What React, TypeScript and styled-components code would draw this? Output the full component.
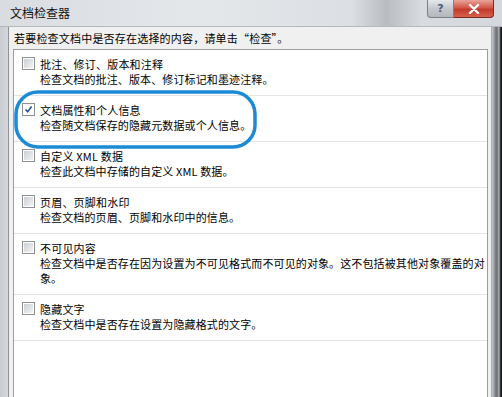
import { createGlobalStyle } from "styled-components";
import styled from "styled-components";

const GlobalStyle = createGlobalStyle`
  html, body {
    margin: 0;
    padding: 0;
    background: #ffffff;
  }
  body {
    font-family: "Noto Sans CJK SC", "Noto Sans", sans-serif;
    color: #000;
  }
`;

type ItemData = {
  title: string;
  desc: string;
  checked?: boolean;
};

const items: ItemData[] = [
  { title: "批注、修订、版本和注释", desc: "检查文档的批注、版本、修订标记和墨迹注释。" },
  { title: "文档属性和个人信息", desc: "检查随文档保存的隐藏元数据或个人信息。", checked: true },
  { title: "自定义 XML 数据", desc: "检查此文档中存储的自定义 XML 数据。" },
  { title: "页眉、页脚和水印", desc: "检查文档的页眉、页脚和水印中的信息。" },
  {
    title: "不可见内容",
    desc: "检查文档中是否存在因为设置为不可见格式而不可见的对象。这不包括被其他对象覆盖的对象。",
  },
  { title: "隐藏文字", desc: "检查文档中是否存在设置为隐藏格式的文字。" },
];

const Window = styled.div`
  width: 502px;
  height: 397px;
  display: flex;
  flex-direction: column;
  overflow: hidden;
  background: linear-gradient(90deg, #c9cdd2 0%, #d6dadf 2%, #d2d6db 100%);
`;

const TitleBar = styled.div`
  height: 27px;
  flex: none;
  display: flex;
  align-items: flex-start;
  justify-content: space-between;
  background: linear-gradient(
    90deg,
    #d9dde2 0%,
    #e4e7ea 40%,
    #dcdfe3 70%,
    #b9bdc2 77%,
    #d8dce0 84%,
    #d4d8dc 100%
  );
  border-bottom: 1px solid #b5b9be;
  box-sizing: border-box;
`;

const Title = styled.div`
  font-size: 12px;
  line-height: 26px;
  padding-left: 10px;
  color: #111;
`;

const Controls = styled.div`
  display: flex;
  margin-right: 8px;
`;

const HelpButton = styled.div`
  width: 27px;
  height: 18px;
  box-sizing: border-box;
  border: 1px solid #7d8186;
  border-top: none;
  border-radius: 0 0 0 4px;
  background: linear-gradient(180deg, #e6e8eb 0%, #c4c8cd 50%, #b4b8bd 100%);
  display: flex;
  align-items: center;
  justify-content: center;
  font-family: "DejaVu Sans", sans-serif;
  font-weight: bold;
  font-size: 11px;
  color: #4a5d7a;
`;

const CloseButton = styled.div`
  width: 40px;
  height: 18px;
  box-sizing: border-box;
  border: 1px solid #7a2a22;
  border-left: none;
  border-top: none;
  border-radius: 0 0 4px 0;
  background: linear-gradient(180deg, #e9a398 0%, #d3584a 45%, #c23a2a 55%, #d8604c 100%);
  display: flex;
  align-items: center;
  justify-content: center;
`;

const Frame = styled.div`
  flex: 1;
  display: flex;
  min-height: 0;
  padding: 0 10px 0 8px;
  position: relative;
  &::after {
    content: "";
    position: absolute;
    top: 0;
    bottom: 0;
    right: 0;
    width: 10px;
    background: linear-gradient(
      90deg,
      #c8ccd0 0%,
      #9da1a5 20%,
      #6f7377 40%,
      #7d8185 60%,
      #c6cacd 70%,
      #3c3f42 80%,
      #111 100%
    );
  }
`;

const Body = styled.div`
  flex: 1;
  display: flex;
  flex-direction: column;
  background: #f0f0f0;
  border-left: 1px solid #8e9297;
  border-right: 1px solid #a9adb2;
  padding: 0 3px 0 4px;
  min-width: 0;
`;

const Instruction = styled.div`
  font-size: 11px;
  letter-spacing: 0.2px;
  line-height: 22px;
  padding: 0 0 0 1px;
  height: 22px;
  flex: none;
`;

const Panel = styled.div`
  flex: 1;
  background: #fff;
  border: 1px solid #9a9ea3;
  border-bottom: none;
  position: relative;
  overflow: hidden;
`;

const Row = styled.div`
  display: flex;
  gap: 5px;
  padding: 6px 1px 8px 8px;
  border-bottom: 1px solid #e4e4e4;
`;

const Box = styled.div<{ $checked?: boolean }>`
  width: 13px;
  height: 13px;
  flex: none;
  margin-top: 1px;
  box-sizing: border-box;
  border: 1px solid #8e8f8f;
  background: #fff;
  display: flex;
  align-items: center;
  justify-content: center;
  &::before {
    content: "";
    display: ${(p) => (p.$checked ? "none" : "block")};
    width: 9px;
    height: 9px;
    background: linear-gradient(135deg, #cbcfd5 0%, #e2e4e7 60%, #f4f4f5 100%);
  }
`;

const TextBlock = styled.div`
  display: flex;
  flex-direction: column;
  width: 446px;
`;

const ItemTitle = styled.div`
  font-size: 11px;
  letter-spacing: 0.2px;
  line-height: 16px;
`;

const ItemDesc = styled.div`
  font-size: 11px;
  letter-spacing: 0.12px;
  line-height: 15px;
`;

const Highlight = styled.svg`
  position: absolute;
  left: 0;
  top: 40px;
  width: 243px;
  height: 60px;
  pointer-events: none;
`;

function Check() {
  return (
    <svg width="9" height="9" viewBox="0 0 9 9">
      <path d="M1.5 4.5 L3.6 6.8 L7.6 1.5" fill="none" stroke="#2a4f9c" strokeWidth="1.6" />
    </svg>
  );
}

function Item({ data }: { data: ItemData }) {
  return (
    <Row>
      <Box $checked={data.checked}>{data.checked && <Check />}</Box>
      <TextBlock>
        <ItemTitle>{data.title}</ItemTitle>
        <ItemDesc>{data.desc}</ItemDesc>
      </TextBlock>
    </Row>
  );
}

export default function App() {
  return (
    <>
      <GlobalStyle />
      <Window>
        <TitleBar>
          <Title>文档检查器</Title>
          <Controls>
            <HelpButton>?</HelpButton>
            <CloseButton>
              <svg width="12" height="10" viewBox="0 0 12 10">
                <path d="M2 1 L10 9 M10 1 L2 9" stroke="#fff" strokeWidth="2.4" strokeLinecap="round" />
              </svg>
            </CloseButton>
          </Controls>
        </TitleBar>
        <Frame>
          <Body>
            <Instruction>若要检查文档中是否存在选择的内容，请单击“检查”。</Instruction>
            <Panel>
              {items.map((it) => (
                <Item key={it.title} data={it} />
              ))}
              <Highlight viewBox="0 0 243 60">
                <rect x="2" y="2" width="239" height="55" rx="22" fill="none" stroke="#1b8bd6" strokeWidth="3.5" />
              </Highlight>
            </Panel>
          </Body>
        </Frame>
      </Window>
    </>
  );
}
